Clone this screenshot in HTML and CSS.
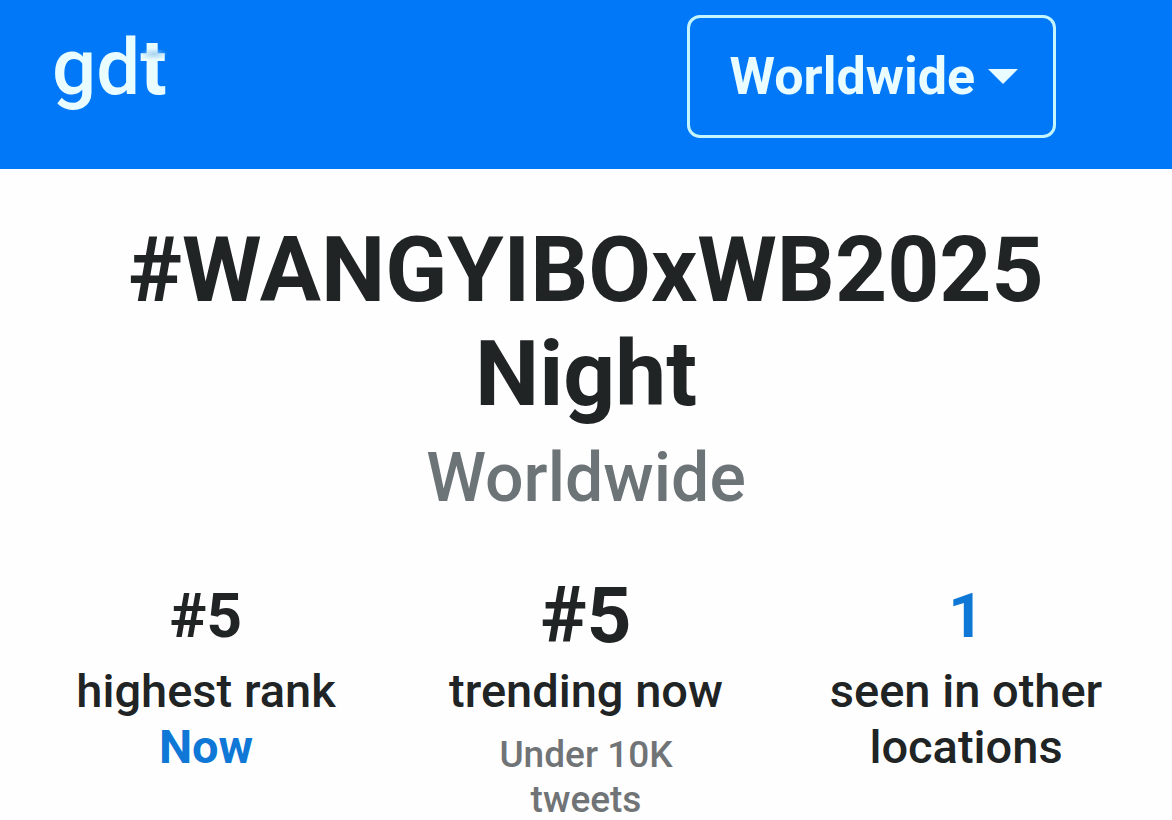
FILE: index.html
```html
<!DOCTYPE html>
<html lang="en">
<head>
    <meta charset="UTF-8">
    <meta name="viewport" content="width=device-width, initial-scale=1.0">
    <title>#WANGYIBOxWB2025Night - Worldwide</title>
    <link rel="stylesheet" href="styles.css">
</head>
<body>
    <header class="navbar">
        <a class="brand" href="#">gd<span class="brand-mark">t</span></a>
        <button class="location-toggle" type="button" aria-haspopup="true">
            Worldwide
            <svg class="caret" viewBox="0 0 30 15" aria-hidden="true"><path d="M0 0h30L15 15z"/></svg>
        </button>
    </header>

    <main class="content">
        <h1 class="trend-name">#WANGYIBOxWB2025<wbr>Night</h1>
        <h2 class="trend-location">Worldwide</h2>

        <div class="stats">
            <div class="stat">
                <div class="stat-value">#5</div>
                <div class="stat-label">highest rank</div>
                <a class="stat-link" href="#">Now</a>
            </div>
            <div class="stat">
                <div class="stat-value stat-value-large">#5</div>
                <div class="stat-label">trending now</div>
                <div class="stat-note">Under 10K tweets</div>
            </div>
            <div class="stat">
                <div class="stat-value"><a href="#">1</a></div>
                <div class="stat-label">seen in other locations</div>
            </div>
        </div>
    </main>
</body>
</html>
```

FILE: styles.css
```css
* {
    box-sizing: border-box;
}
body {
    margin: 0;
    background-color: #fefefe;
    color: #202425;
    font-family: Roboto, "Liberation Sans", sans-serif;
    font-weight: 500;
    text-align: center;
}
a {
    color: #0f78d6;
    text-decoration: none;
}
h1, h2 {
    margin: 0;
}
.navbar {
    display: flex;
    align-items: flex-start;
    justify-content: space-between;
    padding: 15px 116px 31px 52px;
    background-color: #0078f7;
}
.brand {
    padding-top: 11px;
    color: #e9fcff;
    font-size: 78px;
    line-height: 84px;
}
.brand-mark {
    position: relative;
    font-weight: 700;
}
/* soft highlight across the bar of the t */
.brand-mark::after {
    content: "";
    position: absolute;
    top: 26px;
    left: 0;
    width: 28px;
    height: 12px;
    background: radial-gradient(closest-side, rgba(150, 200, 235, 0.8), rgba(150, 200, 235, 0));
}
.location-toggle {
    display: flex;
    align-items: center;
    gap: 13px;
    height: 123px;
    padding: 0 35px 0 40px;
    border: 3px solid #c4f5ff;
    border-radius: 13px;
    background: none;
    color: #e9fcff;
    font-family: inherit;
    font-size: 52px;
    font-weight: 700;
}
.caret {
    width: 30px;
    height: 15px;
    fill: currentColor;
}
.content {
    padding: 49px 16px 0;
}
.trend-name {
    padding: 0 36px;
    font-size: 91px;
    font-weight: 700;
    line-height: 104px;
}
.trend-location {
    color: #6c7478;
    font-size: 68px;
    font-weight: 500;
    line-height: 104px;
}
.stats {
    display: grid;
    grid-template-columns: repeat(3, 1fr);
    margin-top: 35px;
}
.stat {
    padding: 0 36px;
}
.stat-value {
    height: 98px;
    padding-top: 8px;
    font-size: 62px;
    font-weight: 700;
    line-height: 86px;
}
.stat-value-large {
    font-size: 78px;
}
.stat-label {
    font-size: 47px;
    line-height: 56px;
}
.stat-link {
    font-size: 47px;
    font-weight: 700;
    line-height: 56px;
}
.stat-note {
    padding: 13px 36px 0;
    color: #707476;
    font-size: 37px;
    line-height: 45px;
}
```
